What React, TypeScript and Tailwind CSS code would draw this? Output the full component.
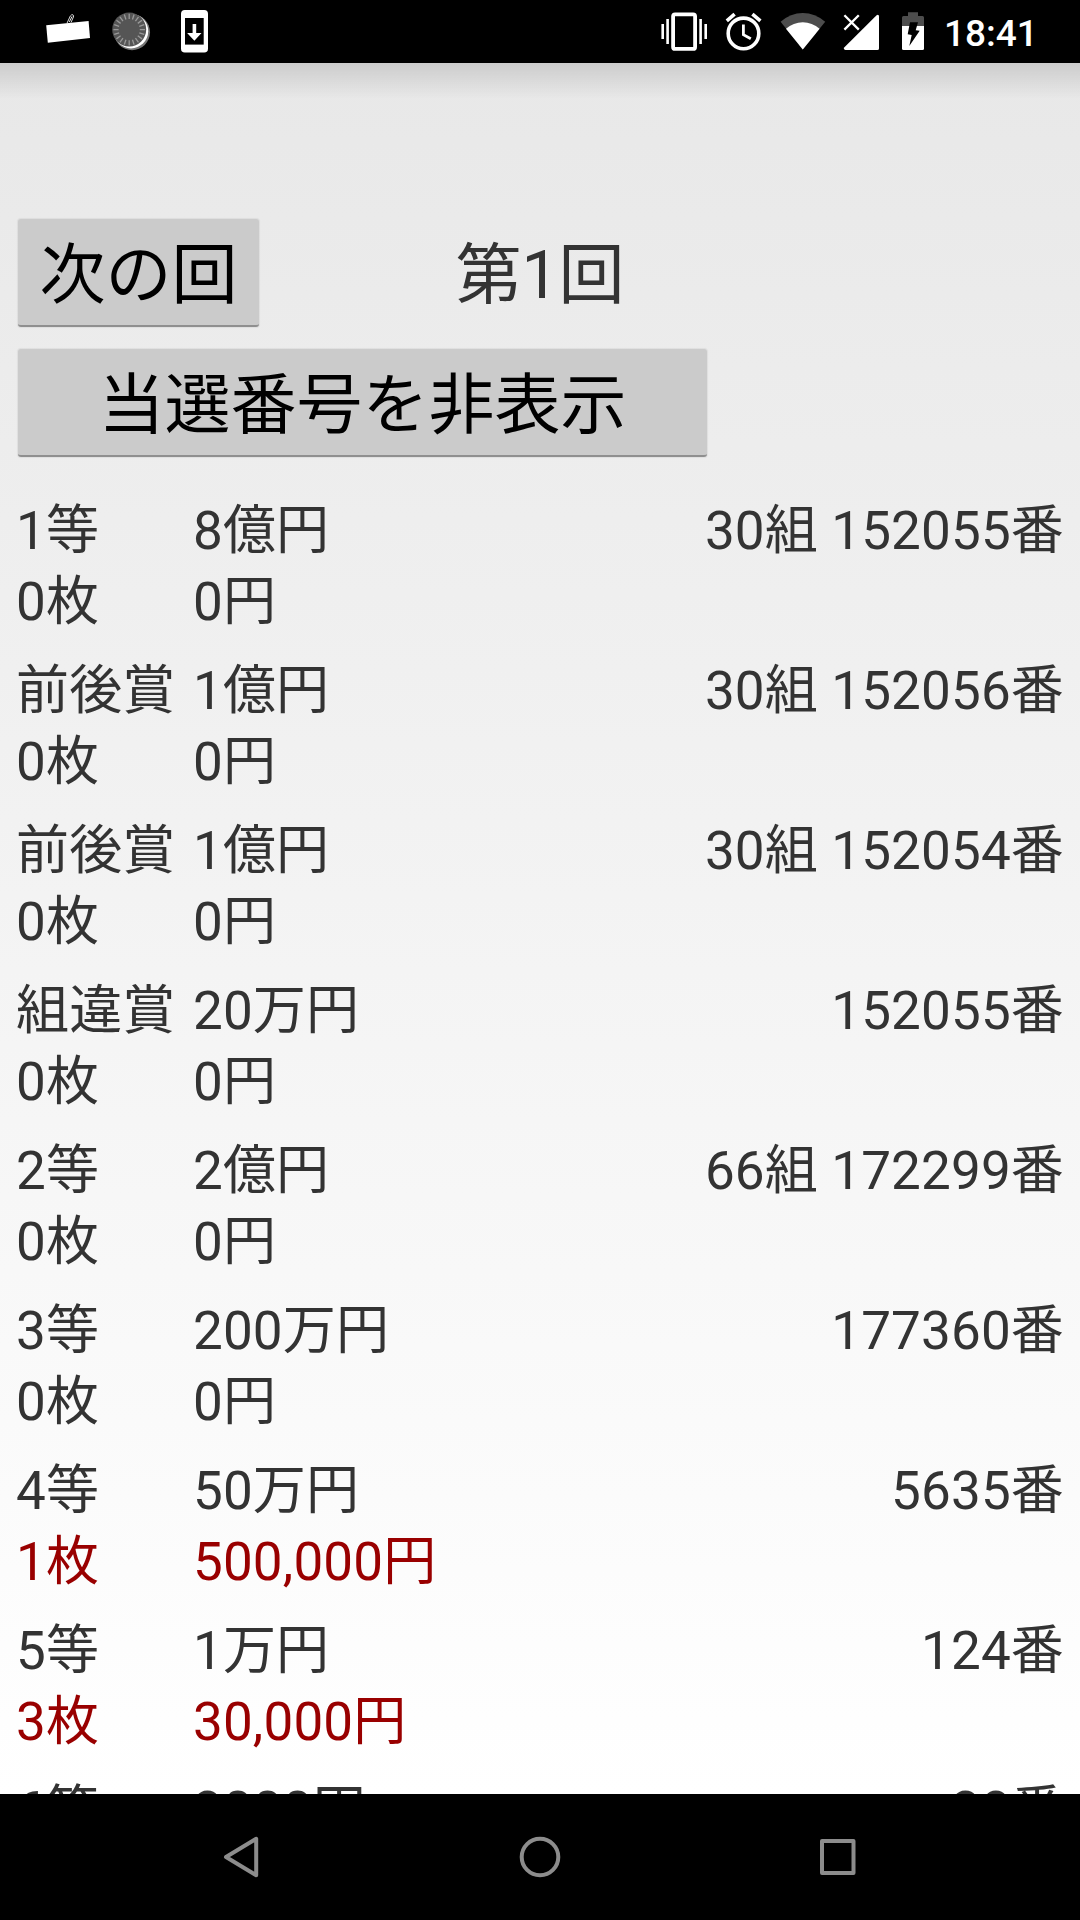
const prizes = [
    { name: '1等', prize: '8億円', number: '30組 152055番', count: '0枚', total: '0円', won: false },
    { name: '前後賞', prize: '1億円', number: '30組 152056番', count: '0枚', total: '0円', won: false },
    { name: '前後賞', prize: '1億円', number: '30組 152054番', count: '0枚', total: '0円', won: false },
    { name: '組違賞', prize: '20万円', number: '152055番', count: '0枚', total: '0円', won: false },
    { name: '2等', prize: '2億円', number: '66組 172299番', count: '0枚', total: '0円', won: false },
    { name: '3等', prize: '200万円', number: '177360番', count: '0枚', total: '0円', won: false },
    { name: '4等', prize: '50万円', number: '5635番', count: '1枚', total: '500,000円', won: true },
    { name: '5等', prize: '1万円', number: '124番', count: '3枚', total: '30,000円', won: true },
    { name: '6等', prize: '3000円', number: '38番', count: '0枚', total: '0円', won: false },
];

const ticks = Array.from({ length: 20 }, (_, i) => i * 18);

const StatusBar = () => {
    return (
        <div className="flex justify-between h-[63px] shrink-0 bg-black pl-[38px] pr-[45px]">
            <div className="flex">
                <svg className="w-[62px] h-[63px]" viewBox="38 0 62 63">
                    <path d="M67 23.2 70.3 16Q71.5 14.3 73 14.8 74 15.5 73.4 17L71 22.5M69.3 22 72 16.5" fill="none" stroke="#ddd" strokeWidth="1" />
                    <path d="M46.2 25.2 88.6 21 90 38 47.8 42.8Z" fill="#fff" />
                </svg>
                <svg className="w-[62px] h-[63px]" viewBox="100 0 62 63">
                    <circle cx="132" cy="32.2" r="18" fill="#777" />
                    <circle cx="131" cy="31.2" r="17.2" fill="#fff" />
                    <circle cx="129.2" cy="29.6" r="17" fill="#555" />
                    {ticks.map((angle) => (
                        <path key={angle} d="M129.2 13.8V19" stroke="#999" strokeWidth="1.3" transform={`rotate(${angle} 129.2 29.6)`} />
                    ))}
                </svg>
                <svg className="w-[62px] h-[63px]" viewBox="162 0 62 63">
                    <rect x="181" y="10" width="27" height="42.5" rx="3.8" fill="#fff" />
                    <rect x="185" y="18" width="18.7" height="26.6" fill="#000" />
                    <path d="M192.6 24h3.6v9h5.3l-7.1 7.8-7.3-7.8h5.5z" fill="#fff" />
                </svg>
            </div>
            <div className="flex">
                <svg className="w-[59px] h-[63px]" viewBox="655 0 59 63">
                    <rect x="673.1" y="14.3" width="22" height="34.6" rx="2" fill="none" stroke="#fff" strokeWidth="3.8" />
                    <path d="M662.7 24v15M667.6 19v25M700.6 19v25M705.7 24v15" stroke="#fff" strokeWidth="2.6" />
                </svg>
                <svg className="w-[59px] h-[63px]" viewBox="714 0 59 63">
                    <circle cx="743.5" cy="33.4" r="15.3" fill="none" stroke="#fff" strokeWidth="3.6" />
                    <path d="M743.4 24.5V34.6L750.8 38.8" fill="none" stroke="#fff" strokeWidth="2.8" />
                    <path d="M726.8 20.8 734.6 14.2M752.4 14.2 760.4 20.8" stroke="#fff" strokeWidth="3.6" />
                </svg>
                <svg className="w-[60px] h-[63px]" viewBox="773 0 60 63">
                    <path d="M780.6 21.8Q790.5 13 802.8 13T825.2 21.8L802.8 49.4Z" fill="#4d4d4d" />
                    <path d="M786 28.8Q793.4 22.2 802.8 22.2T819.6 28.8L802.8 49.4Z" fill="#fff" />
                </svg>
                <svg className="w-[55px] h-[63px]" viewBox="833 0 55 63">
                    <path d="M844.2 47.6 876.6 15.2Q879 14 879 16.6V48.4Q879 50 877.4 50H845.4Q843 49.6 844.2 47.6Z" fill="#fff" />
                    <path d="M844.4 15.2 858.8 29.6M858.8 15.2 844.4 29.6" stroke="#fff" strokeWidth="2.3" />
                </svg>
                <svg className="w-[56px] h-[63px]" viewBox="888 0 56 63">
                    <path d="M908 12.2h10v3.8h4.5q1.5 0 1.5 1.5V26h-22v-8.5q0-1.5 1.5-1.5h4.5z" fill="#4d4d4d" />
                    <path d="M902 26h22v22.5q0 1.5-1.5 1.5h-19q-1.5 0-1.5-1.5z" fill="#fff" />
                    <path d="M910 22.3H918L915.7 30.3 919.7 30.7 909.3 46 911.7 35 907.7 34.3Z" fill="#000" />
                </svg>
                <p className="w-[91px] text-[37px]/[67px] font-medium text-white whitespace-nowrap">18:41</p>
            </div>
        </div>
    );
}

const Button = ({ label, className }: { label: string; className: string }) => {
    return (
        <button className={`h-[108px] rounded-[3px] bg-[#cbcbcb] border-b-2 border-[#8f8f8f] shadow-[0_0_1px_1px_rgba(0,0,0,0.06)] text-[66px]/[114px] text-black whitespace-nowrap ${className}`}>
            {label}
        </button>
    );
}

const PrizeRow = ({ prize }: { prize: typeof prizes[number] }) => {
    return (
        <div className="h-[160px] shrink-0 text-[53px]/[71px] tracking-[0.15px] text-[#333333] whitespace-nowrap">
            <div className="flex">
                <p className="w-[177px]">{prize.name}</p>
                <p>{prize.prize}</p>
                <p className="ml-auto">{prize.number}</p>
            </div>
            <div className={prize.won ? 'flex text-[#990000]' : 'flex'}>
                <p className="w-[177px]">{prize.count}</p>
                <p>{prize.total}</p>
            </div>
        </div>
    );
}

const NavBar = () => {
    return (
        <div className="flex justify-center items-center gap-[250px] h-[126px] shrink-0 bg-black">
            <svg className="size-12" viewBox="0 0 48 48" fill="none" stroke="#8c8c8c" strokeWidth="4" strokeLinejoin="round">
                <path d="M8 24 38.2 5.8V42.2Z" />
            </svg>
            <svg className="size-12" viewBox="0 0 48 48" fill="none" stroke="#8c8c8c" strokeWidth="4">
                <circle cx="24" cy="24" r="18.3" />
            </svg>
            <svg className="size-12" viewBox="0 0 48 48" fill="none" stroke="#8c8c8c" strokeWidth="4" strokeLinejoin="round">
                <rect x="8" y="8" width="31.5" height="32" />
            </svg>
        </div>
    );
}

export default function App() {
    return (
        <div className="flex flex-col w-[1080px] h-[1920px] overflow-hidden font-['Roboto','Noto_Sans_CJK_JP',sans-serif]" lang="ja">
            <StatusBar />
            <div className="flex flex-col h-[1731px] overflow-hidden bg-linear-to-b from-[#e8e8e8] to-white">
                <div className="h-[36px] shrink-0 bg-linear-to-b from-black/12 to-transparent"></div>
                <div className="flex flex-col gap-[22px] h-[397px] shrink-0 pt-[120px] px-[18px]">
                    <div className="grid grid-cols-[1fr_auto_1fr]">
                        <Button label="次の回" className="w-[241px]" />
                        <p className="text-[66px]/[114px] h-[108px] text-[#333333]">第1回</p>
                    </div>
                    <Button label="当選番号を非表示" className="w-[689px]" />
                </div>
                <div className="flex flex-col px-[16px]">
                    {prizes.map((prize, index) => (
                        <PrizeRow key={index} prize={prize} />
                    ))}
                </div>
            </div>
            <NavBar />
        </div>
    );
}
